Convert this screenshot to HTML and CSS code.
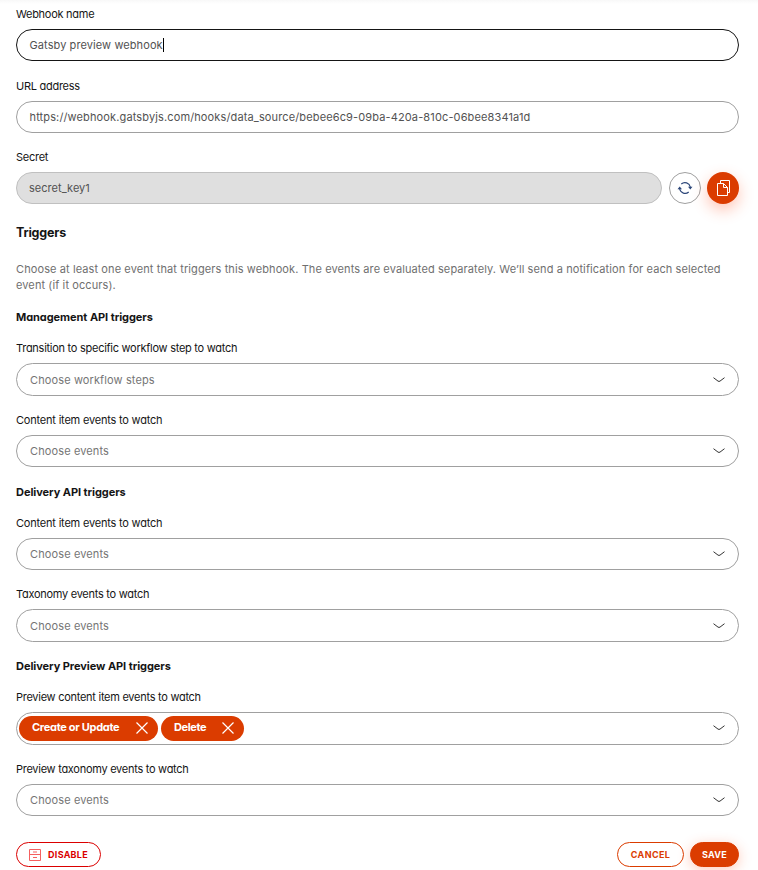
FILE: index.html
```html
<!DOCTYPE html>
<html lang="en">
<head>
<meta charset="utf-8">
<title>Webhook settings</title>
<link rel="stylesheet" href="styles.css">
</head>
<body>
<svg class="defs" width="0" height="0">
  <symbol id="chevron" viewBox="0 0 12 6"><path d="M.5.7 5 4.1Q6 4.8 7 4.1L11.500.7" fill="none" stroke="currentColor"/></symbol>
  <symbol id="cross" viewBox="0 0 12 12"><path d="M.5.5l11 11M11.500.5l-11 11" fill="none" stroke="currentColor" stroke-width="1.2"/></symbol>
</svg>
<main class="page">
  <section class="field field--loose">
    <div class="label">Webhook name</div>
    <div class="control control--focus"><span class="value">Gatsby preview webhook</span><span class="caret"></span></div>
  </section>
  <section class="field">
    <div class="label">URL address</div>
    <div class="control"><span class="value url">https://webhook.gatsbyjs.com/hooks/data_source/bebee6c9-09ba-420a-810c-06bee8341a1d</span></div>
  </section>
  <section class="field">
    <div class="label">Secret</div>
    <div class="secret-row">
      <div class="control control--disabled"><span class="value">secret_key1</span></div>
      <button class="round" aria-label="Regenerate">
        <svg width="16" height="14" viewBox="0 0 16 14"><path d="M4.300 3A5.500 5.500 0 0 1 13.300 6M11.700 11A5.500 5.500 0 0 1 2.700 8" fill="none" stroke="currentColor" stroke-width="1.200"/><path d="M.5 8.300 2.700 5.500 5 8.300zM11 5.700h4.500L13.300 8.500z" fill="currentColor"/></svg>
      </button>
      <button class="round round--primary" aria-label="Copy">
        <svg width="14" height="16" viewBox="0 0 14 16"><path d="M4.500 3V.5h9v12H11.500M1.500 3.500h6l4 4v8h-10zM7.500 3.500v4h4" fill="none" stroke="currentColor"/></svg>
      </button>
    </div>
  </section>

  <h2 class="title">Triggers</h2>
  <p class="intro">Choose at least one event that triggers this webhook. The events are evaluated separately. We’ll send a notification for each selected event (if it occurs).</p>

  <h3 class="group">Management API triggers</h3>
  <section class="field">
    <div class="label">Transition to specific workflow step to watch</div>
    <div class="control control--tall select"><span class="placeholder">Choose workflow steps</span><svg class="chevron"><use href="#chevron"/></svg></div>
  </section>
  <section class="field field--loose">
    <div class="label label--content">Content item events to watch</div>
    <div class="control select"><span class="placeholder">Choose events</span><svg class="chevron"><use href="#chevron"/></svg></div>
  </section>

  <h3 class="group">Delivery API triggers</h3>
  <section class="field">
    <div class="label label--content">Content item events to watch</div>
    <div class="control select"><span class="placeholder">Choose events</span><svg class="chevron"><use href="#chevron"/></svg></div>
  </section>
  <section class="field">
    <div class="label">Taxonomy events to watch</div>
    <div class="control control--tall select"><span class="placeholder">Choose events</span><svg class="chevron"><use href="#chevron"/></svg></div>
  </section>

  <h3 class="group">Delivery Preview API triggers</h3>
  <section class="field">
    <div class="label">Preview content item events to watch</div>
    <div class="control control--tall select select--tags">
      <span class="tag tag--wide"><span>Create or Update</span><svg class="cross"><use href="#cross"/></svg></span>
      <span class="tag tag--short"><span>Delete</span><svg class="cross"><use href="#cross"/></svg></span>
      <svg class="chevron"><use href="#chevron"/></svg>
    </div>
  </section>
  <section class="field">
    <div class="label">Preview taxonomy events to watch</div>
    <div class="control select"><span class="placeholder">Choose events</span><svg class="chevron"><use href="#chevron"/></svg></div>
  </section>

  <footer class="actions">
    <button class="btn btn--danger"><svg width="12" height="12" viewBox="0 0 12 12"><path d="M.5.5h11v11H.5zM.5 5.500h11M4 3h4M4 8.500h4" fill="none" stroke="currentColor"/></svg><span>DISABLE</span></button>
    <button class="btn btn--outline">CANCEL</button>
    <button class="btn btn--primary">SAVE</button>
  </footer>
</main>
</body>
</html>
```
FILE: styles.css
```css
* { box-sizing: border-box; }

body {
  margin: 0;
  background: linear-gradient(#f8f8f8, #fff 4px);
  font-family: Inter, "Open Sans", sans-serif;
  font-size: 11px;
  color: #151515;
  overflow: hidden;
}

.defs { position: absolute; }

.page { padding: 6px 19px 0 16px; height: 870px; }

.field { margin-bottom: 16px; }
.field--loose { margin-bottom: 17px; }

.label {
  height: 16px;
  line-height: 16px;
  margin-bottom: 7px;
  font-feature-settings: "cv11";
  letter-spacing: -0.27px;
  white-space: nowrap;
}
.label--content { letter-spacing: -0.2px; }

.control {
  display: flex;
  align-items: center;
  height: 32px;
  padding: 0 13px 0 12.5px;
  border: 1px solid #a0a0a0;
  border-radius: 17px;
  background: #fff;
}
.control--tall { height: 33px; }
.control--focus { border-color: #151515; }
.control--disabled { flex: 1; padding: 0 12px; background: #dfdfdf; border-color: #c0c0c0; }

.value { color: #525252; letter-spacing: 0.13px; white-space: nowrap; }
.control--focus .value { letter-spacing: 0.09px; }
.control--disabled .value { letter-spacing: 0.03px; }
.caret { width: 1px; height: 14px; background: #000; }

.secret-row { display: flex; align-items: center; }

.round {
  display: flex;
  align-items: center;
  justify-content: center;
  width: 32px;
  height: 32px;
  margin-left: 7px;
  padding: 0;
  border: 1px solid #a0a0a0;
  border-radius: 50%;
  background: #fff;
  color: #2c4679;
}
.round--primary {
  margin-left: 6px;
  border: 0;
  background: #db3c00;
  color: #fff;
  box-shadow: 0 6px 15px rgba(255, 80, 30, 0.33);
}

.title {
  margin: 19px 0 18px;
  font-size: 12.5px;
  line-height: 20px;
  font-weight: 700;
  letter-spacing: -0.2px;
}

.intro {
  margin: 0 0 16px;
  line-height: 16px;
  letter-spacing: 0.1px;
  color: #6f6f6f;
}

.group {
  margin: 0 0 15px;
  font-size: 11px;
  line-height: 16px;
  font-weight: 700;
  font-feature-settings: "cv11";
  letter-spacing: -0.06px;
}

.select { justify-content: space-between; padding-left: 13px; }
.placeholder { color: #757575; letter-spacing: 0.12px; }
.chevron { width: 12px; height: 6px; color: #333; }

.select--tags { padding-left: 2px; justify-content: flex-start; }
.select--tags .chevron { margin: 0 0 1px auto; }

.tag {
  display: flex;
  align-items: center;
  justify-content: space-between;
  height: 25px;
  margin-right: 3px;
  padding: 0 10px 2px 13px;
  border-radius: 13px;
  background: #db3c00;
  color: #fff;
  font-weight: 700;
  font-feature-settings: "cv11";
  white-space: nowrap;
}
.tag > span { margin-top: -1px; }
.tag--wide { width: 139px; letter-spacing: -0.3px; }
.tag--short { width: 83px; letter-spacing: -0.4px; }
.cross { width: 12px; height: 12px; }

.actions { display: flex; margin-top: 26px; }

.btn {
  display: flex;
  align-items: center;
  justify-content: center;
  height: 25px;
  padding: 0;
  border: 1px solid;
  border-radius: 13px;
  background: #fff;
  font: 700 9px Inter, sans-serif;
  letter-spacing: 0.25px;
}
.btn--danger { width: 85px; gap: 7px; margin-right: auto; color: #db0000; }
.btn--danger svg { color: #f56060; }
.btn--outline { width: 67px; margin-right: 6px; color: #db3c00; letter-spacing: 0.35px; }
.btn--primary {
  width: 49px;
  border-color: #db3c00;
  background: #db3c00;
  color: #fff;
  box-shadow: 0 3px 13px rgba(255, 80, 30, 0.3);
}
```
